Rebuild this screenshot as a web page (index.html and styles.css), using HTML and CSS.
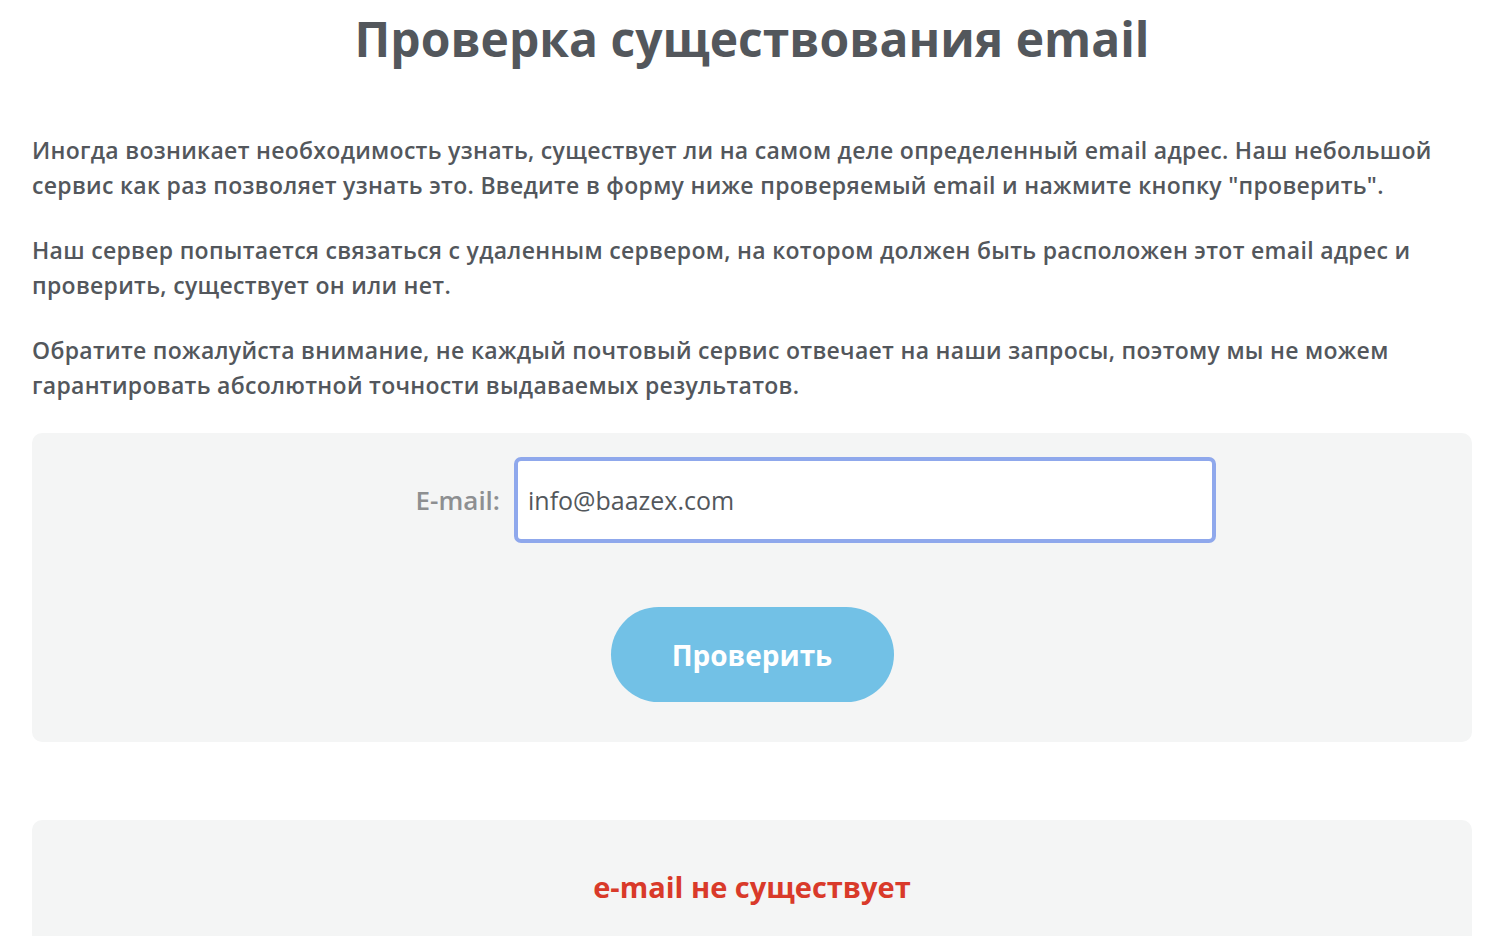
FILE: index.html
```html
<!DOCTYPE html>
<html lang="ru">
<head>
  <meta charset="UTF-8">
  <title>Проверка существования email</title>
  <link rel="stylesheet" href="styles.css">
</head>
<body>
  <div class="page">
    <h1 class="title">Проверка существования email</h1>

    <p class="intro">Иногда возникает необходимость узнать, существует ли на самом деле определенный email адрес. Наш небольшой сервис как раз позволяет узнать это. Введите в форму ниже проверяемый email и нажмите кнопку "проверить".</p>
    <p class="intro">Наш сервер попытается связаться с удаленным сервером, на котором должен быть расположен этот email адрес и проверить, существует он или нет.</p>
    <p class="intro">Обратите пожалуйста внимание, не каждый почтовый сервис отвечает на наши запросы, поэтому мы не можем гарантировать абсолютной точности выдаваемых результатов.</p>

    <!-- форма проверки -->
    <form class="check-form" onsubmit="return false;">
      <div class="field">
        <label for="email">E-mail:</label>
        <input type="text" id="email" value="info@baazex.com" autofocus>
      </div>
      <button class="btn-check" type="submit">Проверить</button>
    </form>

    <!-- результат -->
    <div class="result">
      <span class="result-text">e-mail не существует</span>
    </div>
  </div>
</body>
</html>
```

FILE: styles.css
```css
body {
  margin: 0;
  background: #fff;
  font-family: "Open Sans", Arial, sans-serif;
  color: #53575c;
}

.page {
  padding: 0 28px 0 32px;
}

.title {
  margin: 0;
  padding-top: 9px;
  text-align: center;
  font-size: 48px;
  line-height: 60px;
  font-weight: 700;
  color: #53575c;
}

.intro {
  margin: 0 0 30px;
  font-size: 23px;
  line-height: 35px;
  font-weight: 600;
  letter-spacing: 0.3px;
}

.title + .intro {
  margin-top: 64px;
}

.check-form {
  margin-top: 30px;
  background: #f4f5f5;
  border-radius: 10px;
  padding: 24px 0 40px;
}

.field {
  display: flex;
  align-items: center;
  gap: 14px;
}

.field label {
  width: 468px;
  text-align: right;
  font-size: 26px;
  font-weight: 600;
  color: #8d8f91;
}

.field input {
  width: 702px;
  height: 86px;
  box-sizing: border-box;
  border: 4px solid #8fa8ec;
  border-radius: 7px;
  padding: 0 10px;
  font-family: "Open Sans", Arial, sans-serif;
  font-size: 25px;
  color: #53575c;
  outline: none;
}

.btn-check {
  display: block;
  margin: 64px auto 0;
  width: 283px;
  height: 95px;
  border: none;
  border-radius: 48px;
  background: #72c1e6;
  color: #fff;
  font-family: "Open Sans", Arial, sans-serif;
  font-size: 28px;
  font-weight: 700;
  cursor: pointer;
}

.result {
  margin-top: 78px;
  background: #f4f5f5;
  border-radius: 10px 10px 0 0;
  padding: 47px 0 60px;
  text-align: center;
}

.result-text {
  font-size: 29px;
  font-weight: 700;
  color: #d93a2a;
}
```
